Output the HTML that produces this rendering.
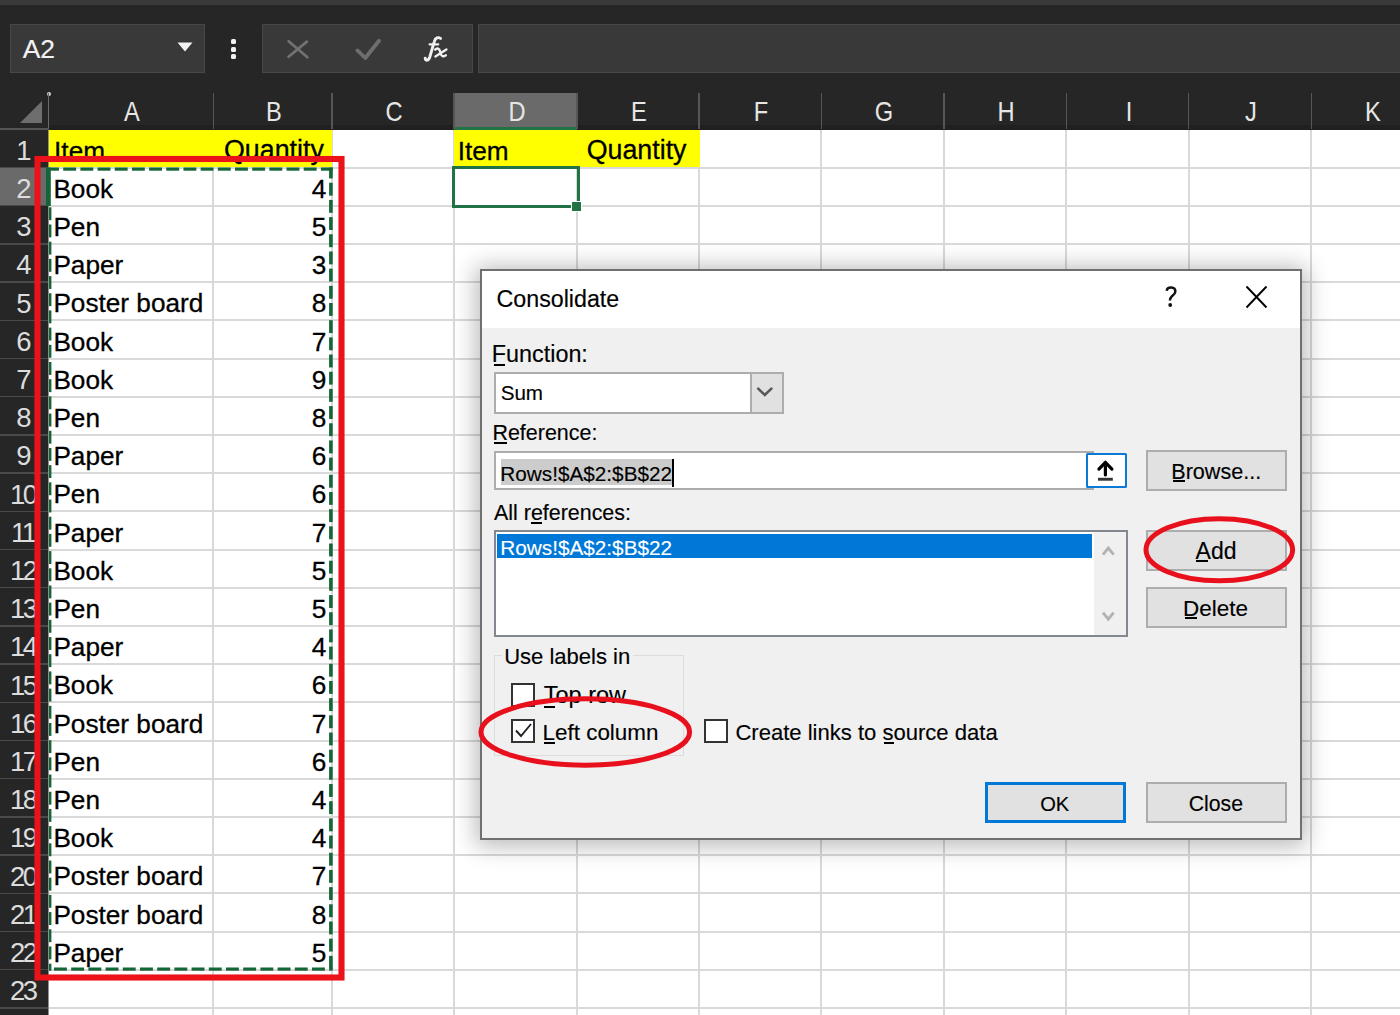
<!DOCTYPE html><html><head><meta charset="utf-8"><style>
*{margin:0;padding:0;box-sizing:border-box}
html,body{width:1400px;height:1015px;overflow:hidden;background:#262626;font-family:"Liberation Sans",sans-serif}
.a{position:absolute}
.t{position:absolute;white-space:pre;line-height:1;-webkit-text-stroke:0.15px currentColor}
.vl{position:absolute;width:2px;background:#d9d9d9}
.hl{position:absolute;height:2px;background:#d9d9d9}
.cell{position:absolute;white-space:pre;line-height:1;font-size:25.5px;color:#000;-webkit-text-stroke:0.3px #000}
.rh{position:absolute;white-space:pre;line-height:1;font-size:25px;color:#dcdcdc;text-align:center;width:48px;letter-spacing:-2.4px;padding-right:2.4px}
.ch{position:absolute;white-space:pre;line-height:1;font-size:25px;color:#e6e6e6;text-align:center}
.dlg{font-size:21.5px;color:#000}
</style></head><body>
<div class="a" style="left:0;top:0;width:1400px;height:5px;background:#3a3a3a"></div>
<div class="a" style="left:9.5px;top:24px;width:195px;height:49px;background:#393939;border:1px solid #474747"></div>
<div class="t" style="left:22.7px;top:36.2px;font-size:26.4px;color:#f2f2f2">A2</div>
<svg class="a" style="left:176px;top:41px" width="18" height="12"><path d="M1.5 1.5 L16.5 1.5 L9 10.5Z" fill="#f2f2f2"/></svg>
<div class="a" style="left:231px;top:39.0px;width:5px;height:5px;border-radius:1.5px;background:#f2f2f2"></div>
<div class="a" style="left:231px;top:46.5px;width:5px;height:5px;border-radius:1.5px;background:#f2f2f2"></div>
<div class="a" style="left:231px;top:54.0px;width:5px;height:5px;border-radius:1.5px;background:#f2f2f2"></div>
<div class="a" style="left:262px;top:24px;width:210.5px;height:49px;background:#393939;border:1px solid #474747"></div>
<svg class="a" style="left:286px;top:38px" width="24" height="23"><path d="M2.6 3.2 L21.4 19.2 M20.9 3.6 L2.6 18.8" stroke="#727272" stroke-width="2.7" stroke-linecap="round"/></svg>
<svg class="a" style="left:354px;top:37px" width="29" height="25"><path d="M3.4 13.4 L11.3 21 L25 3.8" stroke="#6e6e6e" stroke-width="3.8" stroke-linecap="round" stroke-linejoin="round" fill="none"/></svg>
<svg class="a" style="left:420px;top:32px" width="32" height="32"><g fill="none" stroke="#f0f0f0" stroke-linecap="round"><path d="M5.2 26.2 C5.6 29.2, 8.6 28.8, 9.8 25 L14.2 9.8 C15.3 5.6, 18.2 4.8, 20.6 6.4" stroke-width="2.9"/><path d="M9.6 12.3 L18.2 12.3" stroke-width="2.3"/><path d="M15.2 17.6 C17.2 15.6, 19.2 16.2, 20.2 19.6 L20.8 22 C21.6 24.8, 23.6 24.8, 25.8 23.2" stroke-width="2.4"/><path d="M26.4 17.4 L15.4 24.4" stroke-width="2.4"/></g></svg>
<div class="a" style="left:478px;top:24px;width:930px;height:49px;background:#393939;border:1px solid #474747"></div>
<svg class="a" style="left:19px;top:100px" width="24" height="24"><path d="M23 1 L23 23 L1 23Z" fill="#6e6e6e"/></svg>
<div class="a" style="left:48px;top:125px;width:1352px;height:4.6px;background:#202020"></div>
<div class="a" style="left:454px;top:92.5px;width:123px;height:37.099999999999994px;background:#6a6a6a"></div>
<div class="a" style="left:454px;top:127.2px;width:123px;height:3.2px;background:#217346"></div>
<div class="a" style="left:47.8px;top:92.5px;width:1.4px;height:36.19999999999999px;background:#565656"></div>
<div class="ch" style="left:91.85px;width:80px;font-size:27.5px;top:98.49px;transform:scaleX(0.86)">A</div>
<div class="a" style="left:212.5px;top:92.5px;width:1.4px;height:36.19999999999999px;background:#565656"></div>
<div class="ch" style="left:233.60000000000002px;width:80px;font-size:27.5px;top:98.49px;transform:scaleX(0.86)">B</div>
<div class="a" style="left:331.3px;top:92.5px;width:1.4px;height:36.19999999999999px;background:#565656"></div>
<div class="ch" style="left:354.0px;width:80px;font-size:27.5px;top:98.49px;transform:scaleX(0.86)">C</div>
<div class="a" style="left:453.3px;top:92.5px;width:1.4px;height:36.19999999999999px;background:#565656"></div>
<div class="ch" style="left:476.5px;width:80px;font-size:27.5px;top:98.49px;transform:scaleX(0.86)">D</div>
<div class="a" style="left:576.3px;top:92.5px;width:1.4px;height:36.19999999999999px;background:#565656"></div>
<div class="ch" style="left:599.0px;width:80px;font-size:27.5px;top:98.49px;transform:scaleX(0.86)">E</div>
<div class="a" style="left:698.3px;top:92.5px;width:1.4px;height:36.19999999999999px;background:#565656"></div>
<div class="ch" style="left:721.2px;width:80px;font-size:27.5px;top:98.49px;transform:scaleX(0.86)">F</div>
<div class="a" style="left:820.6999999999999px;top:92.5px;width:1.4px;height:36.19999999999999px;background:#565656"></div>
<div class="ch" style="left:843.65px;width:80px;font-size:27.5px;top:98.49px;transform:scaleX(0.86)">G</div>
<div class="a" style="left:943.1999999999999px;top:92.5px;width:1.4px;height:36.19999999999999px;background:#565656"></div>
<div class="ch" style="left:966.0999999999999px;width:80px;font-size:27.5px;top:98.49px;transform:scaleX(0.86)">H</div>
<div class="a" style="left:1065.6px;top:92.5px;width:1.4px;height:36.19999999999999px;background:#565656"></div>
<div class="ch" style="left:1088.5px;width:80px;font-size:27.5px;top:98.49px;transform:scaleX(0.86)">I</div>
<div class="a" style="left:1188.0px;top:92.5px;width:1.4px;height:36.19999999999999px;background:#565656"></div>
<div class="ch" style="left:1210.95px;width:80px;font-size:27.5px;top:98.49px;transform:scaleX(0.86)">J</div>
<div class="a" style="left:1310.5px;top:92.5px;width:1.4px;height:36.19999999999999px;background:#565656"></div>
<div class="ch" style="left:1333.4px;width:80px;font-size:27.5px;top:98.49px;transform:scaleX(0.86)">K</div>
<div class="a" style="left:46.8px;top:91.6px;width:4px;height:4px;border-radius:2px;background:#d0d0d0"></div>
<div class="a" style="left:47.9px;top:92.5px;width:1.6px;height:37px;background:#6a6a6a"></div>
<div class="a" style="left:0;top:128px;width:48.5px;height:1.6px;background:#555"></div>
<div class="a" style="left:48.5px;top:129.6px;width:1351.5px;height:885.4px;background:#fff"></div>
<div class="vl" style="left:212.2px;top:129.6px;height:885.4px"></div>
<div class="vl" style="left:331px;top:129.6px;height:885.4px"></div>
<div class="vl" style="left:453px;top:129.6px;height:885.4px"></div>
<div class="vl" style="left:576px;top:129.6px;height:885.4px"></div>
<div class="vl" style="left:698px;top:129.6px;height:885.4px"></div>
<div class="vl" style="left:820.4px;top:129.6px;height:885.4px"></div>
<div class="vl" style="left:942.9px;top:129.6px;height:885.4px"></div>
<div class="vl" style="left:1065.3px;top:129.6px;height:885.4px"></div>
<div class="vl" style="left:1187.7px;top:129.6px;height:885.4px"></div>
<div class="vl" style="left:1310.2px;top:129.6px;height:885.4px"></div>
<div class="vl" style="left:1432.6px;top:129.6px;height:885.4px"></div>
<div class="hl" style="left:48.5px;top:166.5px;width:1351.5px"></div>
<div class="hl" style="left:48.5px;top:204.70000000000002px;width:1351.5px"></div>
<div class="hl" style="left:48.5px;top:242.90000000000003px;width:1351.5px"></div>
<div class="hl" style="left:48.5px;top:281.1px;width:1351.5px"></div>
<div class="hl" style="left:48.5px;top:319.3px;width:1351.5px"></div>
<div class="hl" style="left:48.5px;top:357.5px;width:1351.5px"></div>
<div class="hl" style="left:48.5px;top:395.70000000000005px;width:1351.5px"></div>
<div class="hl" style="left:48.5px;top:433.90000000000003px;width:1351.5px"></div>
<div class="hl" style="left:48.5px;top:472.1px;width:1351.5px"></div>
<div class="hl" style="left:48.5px;top:510.3px;width:1351.5px"></div>
<div class="hl" style="left:48.5px;top:548.5px;width:1351.5px"></div>
<div class="hl" style="left:48.5px;top:586.7px;width:1351.5px"></div>
<div class="hl" style="left:48.5px;top:624.9000000000001px;width:1351.5px"></div>
<div class="hl" style="left:48.5px;top:663.1000000000001px;width:1351.5px"></div>
<div class="hl" style="left:48.5px;top:701.3px;width:1351.5px"></div>
<div class="hl" style="left:48.5px;top:739.5px;width:1351.5px"></div>
<div class="hl" style="left:48.5px;top:777.7px;width:1351.5px"></div>
<div class="hl" style="left:48.5px;top:815.9000000000001px;width:1351.5px"></div>
<div class="hl" style="left:48.5px;top:854.1000000000001px;width:1351.5px"></div>
<div class="hl" style="left:48.5px;top:892.3px;width:1351.5px"></div>
<div class="hl" style="left:48.5px;top:930.5px;width:1351.5px"></div>
<div class="hl" style="left:48.5px;top:968.7px;width:1351.5px"></div>
<div class="hl" style="left:48.5px;top:1006.9000000000001px;width:1351.5px"></div>
<div class="a" style="left:49.0px;top:129.6px;width:283.0px;height:37.900000000000006px;background:#ffff00"></div>
<div class="a" style="left:454px;top:129.6px;width:245.6px;height:37.900000000000006px;background:#ffff00"></div>
<div class="a" style="left:0;top:166.7px;width:48px;height:1.6px;background:#4a4a4a"></div>
<div class="rh" style="left:0;font-size:27.5px;top:136.79px">1</div>
<div class="a" style="left:0;top:167.5px;width:47.5px;height:38.2px;background:#6a6a6a"></div>
<div class="a" style="left:0;top:204.89999999999998px;width:48px;height:1.6px;background:#4a4a4a"></div>
<div class="rh" style="left:0;font-size:27.5px;top:174.99px">2</div>
<div class="a" style="left:0;top:243.10000000000002px;width:48px;height:1.6px;background:#4a4a4a"></div>
<div class="rh" style="left:0;font-size:27.5px;top:213.19px">3</div>
<div class="a" style="left:0;top:281.3px;width:48px;height:1.6px;background:#4a4a4a"></div>
<div class="rh" style="left:0;font-size:27.5px;top:251.39px">4</div>
<div class="a" style="left:0;top:319.5px;width:48px;height:1.6px;background:#4a4a4a"></div>
<div class="rh" style="left:0;font-size:27.5px;top:289.59px">5</div>
<div class="a" style="left:0;top:357.7px;width:48px;height:1.6px;background:#4a4a4a"></div>
<div class="rh" style="left:0;font-size:27.5px;top:327.79px">6</div>
<div class="a" style="left:0;top:395.9px;width:48px;height:1.6px;background:#4a4a4a"></div>
<div class="rh" style="left:0;font-size:27.5px;top:365.99px">7</div>
<div class="a" style="left:0;top:434.1px;width:48px;height:1.6px;background:#4a4a4a"></div>
<div class="rh" style="left:0;font-size:27.5px;top:404.19px">8</div>
<div class="a" style="left:0;top:472.3px;width:48px;height:1.6px;background:#4a4a4a"></div>
<div class="rh" style="left:0;font-size:27.5px;top:442.39px">9</div>
<div class="a" style="left:0;top:510.5px;width:48px;height:1.6px;background:#4a4a4a"></div>
<div class="rh" style="left:0;font-size:27.5px;top:480.59px">10</div>
<div class="a" style="left:0;top:548.7px;width:48px;height:1.6px;background:#4a4a4a"></div>
<div class="rh" style="left:0;font-size:27.5px;top:518.79px">11</div>
<div class="a" style="left:0;top:586.9000000000001px;width:48px;height:1.6px;background:#4a4a4a"></div>
<div class="rh" style="left:0;font-size:27.5px;top:556.99px">12</div>
<div class="a" style="left:0;top:625.1000000000001px;width:48px;height:1.6px;background:#4a4a4a"></div>
<div class="rh" style="left:0;font-size:27.5px;top:595.19px">13</div>
<div class="a" style="left:0;top:663.3000000000002px;width:48px;height:1.6px;background:#4a4a4a"></div>
<div class="rh" style="left:0;font-size:27.5px;top:633.39px">14</div>
<div class="a" style="left:0;top:701.5000000000002px;width:48px;height:1.6px;background:#4a4a4a"></div>
<div class="rh" style="left:0;font-size:27.5px;top:671.59px">15</div>
<div class="a" style="left:0;top:739.7px;width:48px;height:1.6px;background:#4a4a4a"></div>
<div class="rh" style="left:0;font-size:27.5px;top:709.79px">16</div>
<div class="a" style="left:0;top:777.9000000000001px;width:48px;height:1.6px;background:#4a4a4a"></div>
<div class="rh" style="left:0;font-size:27.5px;top:747.99px">17</div>
<div class="a" style="left:0;top:816.1000000000001px;width:48px;height:1.6px;background:#4a4a4a"></div>
<div class="rh" style="left:0;font-size:27.5px;top:786.19px">18</div>
<div class="a" style="left:0;top:854.3000000000002px;width:48px;height:1.6px;background:#4a4a4a"></div>
<div class="rh" style="left:0;font-size:27.5px;top:824.39px">19</div>
<div class="a" style="left:0;top:892.5000000000002px;width:48px;height:1.6px;background:#4a4a4a"></div>
<div class="rh" style="left:0;font-size:27.5px;top:862.59px">20</div>
<div class="a" style="left:0;top:930.7px;width:48px;height:1.6px;background:#4a4a4a"></div>
<div class="rh" style="left:0;font-size:27.5px;top:900.79px">21</div>
<div class="a" style="left:0;top:968.9000000000001px;width:48px;height:1.6px;background:#4a4a4a"></div>
<div class="rh" style="left:0;font-size:27.5px;top:938.99px">22</div>
<div class="a" style="left:0;top:1007.1000000000001px;width:48px;height:1.6px;background:#4a4a4a"></div>
<div class="rh" style="left:0;font-size:27.5px;top:977.19px">23</div>
<div class="a" style="left:47.6px;top:129.6px;width:1px;height:885.4px;background:#8f8f8f"></div>
<div class="cell" style="font-size:26.2px;left:54.1px;top:137.50px">Item</div>
<div class="cell" style="font-size:26.8px;left:224px;top:136.99px">Quantity</div>
<div class="cell" style="font-size:26.2px;left:457.7px;top:137.50px">Item</div>
<div class="cell" style="font-size:26.8px;left:586.7px;top:136.99px">Quantity</div>
<div class="cell" style="font-size:26.2px;left:53.4px;top:175.70px">Book</div>
<div class="cell" style="font-size:26.2px;right:1073.6px;top:175.70px">4</div>
<div class="cell" style="font-size:26.2px;left:53.4px;top:213.90px">Pen</div>
<div class="cell" style="font-size:26.2px;right:1073.6px;top:213.90px">5</div>
<div class="cell" style="font-size:26.2px;left:53.4px;top:252.10px">Paper</div>
<div class="cell" style="font-size:26.2px;right:1073.6px;top:252.10px">3</div>
<div class="cell" style="font-size:26.2px;left:53.4px;top:290.30px">Poster board</div>
<div class="cell" style="font-size:26.2px;right:1073.6px;top:290.30px">8</div>
<div class="cell" style="font-size:26.2px;left:53.4px;top:328.50px">Book</div>
<div class="cell" style="font-size:26.2px;right:1073.6px;top:328.50px">7</div>
<div class="cell" style="font-size:26.2px;left:53.4px;top:366.70px">Book</div>
<div class="cell" style="font-size:26.2px;right:1073.6px;top:366.70px">9</div>
<div class="cell" style="font-size:26.2px;left:53.4px;top:404.90px">Pen</div>
<div class="cell" style="font-size:26.2px;right:1073.6px;top:404.90px">8</div>
<div class="cell" style="font-size:26.2px;left:53.4px;top:443.10px">Paper</div>
<div class="cell" style="font-size:26.2px;right:1073.6px;top:443.10px">6</div>
<div class="cell" style="font-size:26.2px;left:53.4px;top:481.30px">Pen</div>
<div class="cell" style="font-size:26.2px;right:1073.6px;top:481.30px">6</div>
<div class="cell" style="font-size:26.2px;left:53.4px;top:519.50px">Paper</div>
<div class="cell" style="font-size:26.2px;right:1073.6px;top:519.50px">7</div>
<div class="cell" style="font-size:26.2px;left:53.4px;top:557.70px">Book</div>
<div class="cell" style="font-size:26.2px;right:1073.6px;top:557.70px">5</div>
<div class="cell" style="font-size:26.2px;left:53.4px;top:595.90px">Pen</div>
<div class="cell" style="font-size:26.2px;right:1073.6px;top:595.90px">5</div>
<div class="cell" style="font-size:26.2px;left:53.4px;top:634.10px">Paper</div>
<div class="cell" style="font-size:26.2px;right:1073.6px;top:634.10px">4</div>
<div class="cell" style="font-size:26.2px;left:53.4px;top:672.30px">Book</div>
<div class="cell" style="font-size:26.2px;right:1073.6px;top:672.30px">6</div>
<div class="cell" style="font-size:26.2px;left:53.4px;top:710.50px">Poster board</div>
<div class="cell" style="font-size:26.2px;right:1073.6px;top:710.50px">7</div>
<div class="cell" style="font-size:26.2px;left:53.4px;top:748.70px">Pen</div>
<div class="cell" style="font-size:26.2px;right:1073.6px;top:748.70px">6</div>
<div class="cell" style="font-size:26.2px;left:53.4px;top:786.90px">Pen</div>
<div class="cell" style="font-size:26.2px;right:1073.6px;top:786.90px">4</div>
<div class="cell" style="font-size:26.2px;left:53.4px;top:825.10px">Book</div>
<div class="cell" style="font-size:26.2px;right:1073.6px;top:825.10px">4</div>
<div class="cell" style="font-size:26.2px;left:53.4px;top:863.30px">Poster board</div>
<div class="cell" style="font-size:26.2px;right:1073.6px;top:863.30px">7</div>
<div class="cell" style="font-size:26.2px;left:53.4px;top:901.50px">Poster board</div>
<div class="cell" style="font-size:26.2px;right:1073.6px;top:901.50px">8</div>
<div class="cell" style="font-size:26.2px;left:53.4px;top:939.70px">Paper</div>
<div class="cell" style="font-size:26.2px;right:1073.6px;top:939.70px">5</div>
<div class="a" style="left:451.5px;top:165.5px;width:128px;height:42.5px;border:3px solid #217346"></div>
<div class="a" style="left:571px;top:201px;width:10.5px;height:10.5px;background:#217346;border:1px solid #fff"></div>
<svg class="a" style="left:0;top:0" width="1400" height="1015"><g fill="#146537"><rect x="49.00" y="167.5" width="9.92" height="3.2"/><rect x="63.20" y="167.5" width="12.90" height="3.2"/><rect x="80.38" y="167.5" width="12.90" height="3.2"/><rect x="97.56" y="167.5" width="12.90" height="3.2"/><rect x="114.74" y="167.5" width="12.90" height="3.2"/><rect x="131.92" y="167.5" width="12.90" height="3.2"/><rect x="149.10" y="167.5" width="12.90" height="3.2"/><rect x="166.28" y="167.5" width="12.90" height="3.2"/><rect x="183.46" y="167.5" width="12.90" height="3.2"/><rect x="200.64" y="167.5" width="12.90" height="3.2"/><rect x="217.82" y="167.5" width="12.90" height="3.2"/><rect x="235.00" y="167.5" width="12.90" height="3.2"/><rect x="252.18" y="167.5" width="12.90" height="3.2"/><rect x="269.36" y="167.5" width="12.90" height="3.2"/><rect x="286.54" y="167.5" width="12.90" height="3.2"/><rect x="303.72" y="167.5" width="12.90" height="3.2"/><rect x="320.90" y="167.5" width="11.80" height="3.2"/><rect x="49.00" y="967.5" width="0.70" height="3.2"/><rect x="54.00" y="967.5" width="12.90" height="3.2"/><rect x="71.20" y="967.5" width="12.90" height="3.2"/><rect x="88.40" y="967.5" width="12.90" height="3.2"/><rect x="105.60" y="967.5" width="12.90" height="3.2"/><rect x="122.80" y="967.5" width="12.90" height="3.2"/><rect x="140.00" y="967.5" width="12.90" height="3.2"/><rect x="157.20" y="967.5" width="12.90" height="3.2"/><rect x="174.40" y="967.5" width="12.90" height="3.2"/><rect x="191.60" y="967.5" width="12.90" height="3.2"/><rect x="208.80" y="967.5" width="12.90" height="3.2"/><rect x="226.00" y="967.5" width="12.90" height="3.2"/><rect x="243.20" y="967.5" width="12.90" height="3.2"/><rect x="260.40" y="967.5" width="12.90" height="3.2"/><rect x="277.60" y="967.5" width="12.90" height="3.2"/><rect x="294.80" y="967.5" width="12.90" height="3.2"/><rect x="312.00" y="967.5" width="12.90" height="3.2"/><rect x="329.20" y="967.5" width="3.50" height="3.2"/><rect x="49" y="207.30" width="2.4" height="12.90"/><rect x="49" y="224.49" width="2.4" height="12.90"/><rect x="49" y="241.68" width="2.4" height="12.90"/><rect x="49" y="258.87" width="2.4" height="12.90"/><rect x="49" y="276.06" width="2.4" height="12.90"/><rect x="49" y="293.25" width="2.4" height="12.90"/><rect x="49" y="310.44" width="2.4" height="12.90"/><rect x="49" y="327.63" width="2.4" height="12.90"/><rect x="49" y="344.82" width="2.4" height="12.90"/><rect x="49" y="362.01" width="2.4" height="12.90"/><rect x="49" y="379.20" width="2.4" height="12.90"/><rect x="49" y="396.39" width="2.4" height="12.90"/><rect x="49" y="413.58" width="2.4" height="12.90"/><rect x="49" y="430.77" width="2.4" height="12.90"/><rect x="49" y="447.96" width="2.4" height="12.90"/><rect x="49" y="465.15" width="2.4" height="12.90"/><rect x="49" y="482.34" width="2.4" height="12.90"/><rect x="49" y="499.53" width="2.4" height="12.90"/><rect x="49" y="516.72" width="2.4" height="12.90"/><rect x="49" y="533.91" width="2.4" height="12.90"/><rect x="49" y="551.10" width="2.4" height="12.90"/><rect x="49" y="568.29" width="2.4" height="12.90"/><rect x="49" y="585.48" width="2.4" height="12.90"/><rect x="49" y="602.67" width="2.4" height="12.90"/><rect x="49" y="619.86" width="2.4" height="12.90"/><rect x="49" y="637.05" width="2.4" height="12.90"/><rect x="49" y="654.24" width="2.4" height="12.90"/><rect x="49" y="671.43" width="2.4" height="12.90"/><rect x="49" y="688.62" width="2.4" height="12.90"/><rect x="49" y="705.81" width="2.4" height="12.90"/><rect x="49" y="723.00" width="2.4" height="12.90"/><rect x="49" y="740.19" width="2.4" height="12.90"/><rect x="49" y="757.38" width="2.4" height="12.90"/><rect x="49" y="774.57" width="2.4" height="12.90"/><rect x="49" y="791.76" width="2.4" height="12.90"/><rect x="49" y="808.95" width="2.4" height="12.90"/><rect x="49" y="826.14" width="2.4" height="12.90"/><rect x="49" y="843.33" width="2.4" height="12.90"/><rect x="49" y="860.52" width="2.4" height="12.90"/><rect x="49" y="877.71" width="2.4" height="12.90"/><rect x="49" y="894.90" width="2.4" height="12.90"/><rect x="49" y="912.09" width="2.4" height="12.90"/><rect x="49" y="929.28" width="2.4" height="12.90"/><rect x="49" y="946.47" width="2.4" height="12.90"/><rect x="49" y="963.66" width="2.4" height="7.04"/><rect x="329.1" y="167.50" width="3.6" height="10.96"/><rect x="329.1" y="182.74" width="3.6" height="12.90"/><rect x="329.1" y="199.92" width="3.6" height="12.90"/><rect x="329.1" y="217.10" width="3.6" height="12.90"/><rect x="329.1" y="234.28" width="3.6" height="12.90"/><rect x="329.1" y="251.46" width="3.6" height="12.90"/><rect x="329.1" y="268.64" width="3.6" height="12.90"/><rect x="329.1" y="285.82" width="3.6" height="12.90"/><rect x="329.1" y="303.00" width="3.6" height="12.90"/><rect x="329.1" y="320.18" width="3.6" height="12.90"/><rect x="329.1" y="337.36" width="3.6" height="12.90"/><rect x="329.1" y="354.54" width="3.6" height="12.90"/><rect x="329.1" y="371.72" width="3.6" height="12.90"/><rect x="329.1" y="388.90" width="3.6" height="12.90"/><rect x="329.1" y="406.08" width="3.6" height="12.90"/><rect x="329.1" y="423.26" width="3.6" height="12.90"/><rect x="329.1" y="440.44" width="3.6" height="12.90"/><rect x="329.1" y="457.62" width="3.6" height="12.90"/><rect x="329.1" y="474.80" width="3.6" height="12.90"/><rect x="329.1" y="491.98" width="3.6" height="12.90"/><rect x="329.1" y="509.16" width="3.6" height="12.90"/><rect x="329.1" y="526.34" width="3.6" height="12.90"/><rect x="329.1" y="543.52" width="3.6" height="12.90"/><rect x="329.1" y="560.70" width="3.6" height="12.90"/><rect x="329.1" y="577.88" width="3.6" height="12.90"/><rect x="329.1" y="595.06" width="3.6" height="12.90"/><rect x="329.1" y="612.24" width="3.6" height="12.90"/><rect x="329.1" y="629.42" width="3.6" height="12.90"/><rect x="329.1" y="646.60" width="3.6" height="12.90"/><rect x="329.1" y="663.78" width="3.6" height="12.90"/><rect x="329.1" y="680.96" width="3.6" height="12.90"/><rect x="329.1" y="698.14" width="3.6" height="12.90"/><rect x="329.1" y="715.32" width="3.6" height="12.90"/><rect x="329.1" y="732.50" width="3.6" height="12.90"/><rect x="329.1" y="749.68" width="3.6" height="12.90"/><rect x="329.1" y="766.86" width="3.6" height="12.90"/><rect x="329.1" y="784.04" width="3.6" height="12.90"/><rect x="329.1" y="801.22" width="3.6" height="12.90"/><rect x="329.1" y="818.40" width="3.6" height="12.90"/><rect x="329.1" y="835.58" width="3.6" height="12.90"/><rect x="329.1" y="852.76" width="3.6" height="12.90"/><rect x="329.1" y="869.94" width="3.6" height="12.90"/><rect x="329.1" y="887.12" width="3.6" height="12.90"/><rect x="329.1" y="904.30" width="3.6" height="12.90"/><rect x="329.1" y="921.48" width="3.6" height="12.90"/><rect x="329.1" y="938.66" width="3.6" height="12.90"/><rect x="329.1" y="955.84" width="3.6" height="12.90"/></g><rect x="46" y="167.5" width="4.8" height="38.5" fill="#146537"/><rect x="37.5" y="159" width="304" height="818.5" fill="none" stroke="#eb1219" stroke-width="6.1"/></svg>
<div class="a" style="left:480.3px;top:268.6px;width:821.7px;height:571.9px;background:#f0f0f0;border:2px solid #707070;box-shadow:0 2px 22px 4px rgba(0,0,0,0.28)"></div>
<div class="a" style="left:482.3px;top:270.6px;width:817.7px;height:57.099999999999966px;background:#fff"></div>
<div class="t" style="left:496.54px;top:288.23px;font-size:23.24px;color:#000;">Consolidate</div>
<svg class="a" style="left:1162px;top:284px" width="18" height="26"><path d="M4.6 6.8 C5 4.4, 7 3.3, 9.2 3.4 C12 3.5, 13.6 5.3, 13.3 7.8 C13 10, 11 11.2, 9.6 12.6 C8.3 13.9, 7.9 15, 7.9 16.6" stroke="#111" stroke-width="2.5" fill="none"/><circle cx="8.2" cy="21" r="1.9" fill="#111"/></svg>
<svg class="a" style="left:1244px;top:284px" width="25" height="26"><path d="M2.5 2.5 L22.5 23.5 M22.5 2.5 L2.5 23.5" stroke="#000" stroke-width="1.9"/></svg>
<div class="t" style="left:491.83px;top:343.04px;font-size:23.35px;color:#000;">Function:</div>
<div class="a" style="left:494px;top:364px;width:11px;height:2px;background:#000"></div>
<div class="a" style="left:493.5px;top:371.7px;width:290.5px;height:42px;background:#fff;border:2px solid #adadad"></div>
<div class="a" style="left:749.7px;top:371.7px;width:34.3px;height:42px;background:#e1e1e1;border:2px solid #adadad"></div>
<svg class="a" style="left:755px;top:385px" width="21" height="13"><path d="M3.2 3.6 L9.8 10 L16.4 3.6" stroke="#585858" stroke-width="2.6" stroke-linecap="round" fill="none"/></svg>
<div class="t" style="left:500.67px;top:383.37px;font-size:20.62px;color:#000;">Sum</div>
<div class="t" style="left:492.48px;top:422.67px;font-size:21.44px;color:#000;">Reference:</div>
<div class="a" style="left:494px;top:442px;width:13px;height:2px;background:#000"></div>
<div class="a" style="left:493.7px;top:451.2px;width:600px;height:38.6px;background:#fff;border:2px solid #adadad;border-right:none"></div>
<div class="a" style="left:501px;top:459.4px;width:170.5px;height:25.2px;background:#cccccc"></div>
<div class="t" style="left:500.34px;top:463.77px;font-size:20.74px;color:#000;">Rows!$A$2:$B$22</div>
<div class="a" style="left:671.5px;top:459px;width:2px;height:28px;background:#000"></div>
<div class="a" style="left:1086.4px;top:452.9px;width:40.6px;height:35.4px;background:#fff;border:2.4px solid #0a7ad6;border-radius:1.5px"></div>
<svg class="a" style="left:1090px;top:455px" width="32" height="30"><path d="M8.9 14.1 L15.4 7.3 L21.9 14.1 M15.4 8 L15.4 20" stroke="#000" stroke-width="3.2" stroke-linecap="round" stroke-linejoin="round" fill="none"/><rect x="8" y="22.8" width="14.8" height="2.9" fill="#333"/></svg>
<div class="a" style="left:1145.7px;top:450px;width:141.3px;height:41px;background:#e1e1e1;border:2px solid #adadad"></div>
<div class="t" style="left:1171.27px;top:460.55px;font-size:21.57px;color:#000;">Browse...</div>
<div class="a" style="left:1173px;top:480px;width:12px;height:2px;background:#000"></div>
<div class="t" style="left:494.00px;top:502.68px;font-size:21.43px;color:#000;">All references:</div>
<div class="a" style="left:531px;top:522px;width:11px;height:2px;background:#000"></div>
<div class="a" style="left:493.6px;top:530.2px;width:634.2px;height:106.4px;background:#fff;border:2px solid #828790"></div>
<div class="a" style="left:497px;top:534px;width:595px;height:24.4px;background:#0078d7"></div>
<div class="t" style="left:500.34px;top:537.87px;font-size:20.74px;color:#fff;">Rows!$A$2:$B$22</div>
<div class="a" style="left:1094px;top:532.2px;width:31.8px;height:102.4px;background:#f0f0f0"></div>
<svg class="a" style="left:1100px;top:544px" width="17" height="14"><path d="M3 10.6 L8.3 4 L13.6 10.6" stroke="#b2b2b2" stroke-width="2.8" fill="none"/></svg>
<svg class="a" style="left:1100px;top:609px" width="17" height="14"><path d="M3 3.6 L8.3 10.2 L13.6 3.6" stroke="#b2b2b2" stroke-width="2.8" fill="none"/></svg>
<div class="a" style="left:1145.7px;top:530px;width:141.3px;height:40.8px;background:#e1e1e1;border:2px solid #adadad"></div>
<div class="t" style="left:1195.60px;top:539.70px;font-size:23.04px;color:#000;">Add</div>
<div class="a" style="left:1196px;top:560px;width:12px;height:2px;background:#000"></div>
<div class="a" style="left:1145.7px;top:587.1px;width:141.3px;height:41.2px;background:#e1e1e1;border:2px solid #adadad"></div>
<div class="t" style="left:1182.90px;top:597.77px;font-size:22.49px;color:#000;">Delete</div>
<div class="a" style="left:1185px;top:617px;width:12px;height:2px;background:#000"></div>
<div class="a" style="left:494.3px;top:655px;width:189.7px;height:100.7px;border:1.5px solid #dcdcdc"></div>
<div class="a" style="left:502px;top:645px;width:131px;height:22px;background:#f0f0f0"></div>
<div class="t" style="left:504.14px;top:645.65px;font-size:22.04px;color:#000;">Use labels in</div>
<div class="a" style="left:511px;top:682.7px;width:24.3px;height:24.3px;background:#fff;border:2px solid #333"></div>
<div class="t" style="left:543.83px;top:684.43px;font-size:23.48px;color:#000;">Top row</div>
<div class="a" style="left:544px;top:706px;width:11px;height:2px;background:#000"></div>
<div class="a" style="left:511px;top:718.6px;width:24.3px;height:24.3px;background:#fff;border:2px solid #333"></div>
<svg class="a" style="left:513px;top:720px" width="21" height="21"><path d="M3 10.5 L8 16 L18 4" stroke="#222" stroke-width="1.9" fill="none"/></svg>
<div class="t" style="left:542.50px;top:721.61px;font-size:22.45px;color:#000;">Left column</div>
<div class="a" style="left:544px;top:742px;width:11px;height:2px;background:#000"></div>
<div class="a" style="left:704.4px;top:718.6px;width:23.5px;height:24.3px;background:#fff;border:2px solid #333"></div>
<div class="t" style="left:735.40px;top:721.95px;font-size:22.05px;color:#000;">Create links to source data</div>
<div class="a" style="left:884px;top:741.6px;width:9.5px;height:2px;background:#000"></div>
<div class="a" style="left:985px;top:782.1px;width:141.1px;height:41.3px;background:#e1e1e1;border:3px solid #0078d7"></div>
<div class="t" style="left:1040.19px;top:793.78px;font-size:20.14px;color:#000;">OK</div>
<div class="a" style="left:1146px;top:782px;width:141px;height:41px;background:#e1e1e1;border:2px solid #adadad"></div>
<div class="t" style="left:1188.74px;top:792.86px;font-size:21.22px;color:#000;">Close</div>
<svg class="a" style="left:1135px;top:505px" width="170" height="90"><ellipse cx="84.3" cy="44.75" rx="73.3" ry="31.1" fill="none" stroke="#e8101c" stroke-width="5"/></svg>
<svg class="a" style="left:470px;top:688px" width="232" height="90"><ellipse cx="115.3" cy="44" rx="104.3" ry="33.2" fill="none" stroke="#e8101c" stroke-width="5"/></svg>
</body></html>
